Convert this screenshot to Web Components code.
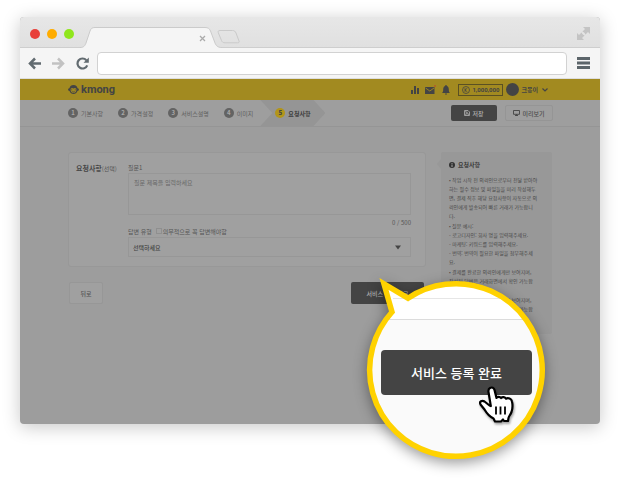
<!DOCTYPE html>
<html lang="ko">
<head>
<meta charset="utf-8">
<title>kmong</title>
<style>
body{margin:0;background:#fff;font-family:"Noto Sans CJK KR","Noto Sans",sans-serif;font-size:6px;line-height:9px;color:#555}
</style>
</head>
<body>
<browser-window>
  <tab-strip></tab-strip>
  <tool-bar></tool-bar>
  <site-header></site-header>
  <step-nav>
    <step-item n="1">기본사항</step-item>
    <step-item n="2">가격설정</step-item>
    <step-item n="3">서비스설명</step-item>
    <step-item n="4">이미지</step-item>
    <step-item n="5" active>요청사항</step-item>
  </step-nav>
  <page-body>
    <request-form></request-form>
    <help-panel slot="side"></help-panel>
  </page-body>
  <zoom-bubble slot="over">서비스 등록 완료</zoom-bubble>
</browser-window>
<script>
const base = `<style>
:host,*{box-sizing:border-box}
button,input,textarea,select{font:inherit;color:inherit;margin:0;padding:0;border:0;background:none;border-radius:0;outline:0}
svg{display:block;flex:none}
a{color:inherit;text-decoration:none}
</style>`;
const define = (name, html) => customElements.define(name, class extends HTMLElement {
  constructor() {
    super();
    this.attachShadow({mode: 'open'}).innerHTML = base + html;
  }
});

define('browser-window', `<style>
:host{display:block;padding:17px 25px 56px 20px}
.frame{position:relative;border-radius:4px;background:#9d9d9d;box-shadow:0 3px 18px rgba(0,0,0,.22)}
</style><div class="frame"><slot></slot><slot name="over"></slot></div>`);

define('tab-strip', `<style>
:host{display:flex;align-items:flex-end;height:31px;padding:0 10px;background:linear-gradient(#e7e7e7,#e0e0e0);border-bottom:1px solid #cecece;border-radius:4px 4px 0 0}
.lights{display:flex;gap:7px;margin-bottom:8px}
.lights i{width:10px;height:10px;border-radius:50%}
.tab{position:relative;width:142px;height:21px;margin:0 0 -1px 6px}
.tab>svg{position:absolute;inset:0}
.tab button{position:absolute;right:15px;top:7px;width:9px;height:9px;display:grid;place-items:center}
.new{margin:0 auto 3px -5px}
.full{margin-bottom:7px}
</style>
<div class="lights"><i style="background:#e8403a"></i><i style="background:#ffac00"></i><i style="background:#90e61c"></i></div>
<div class="tab">
<svg width="142" height="21"><path d="M0 20.5C4 20.5 5 18.500 6 16L10 4C11 1.500 12 .5 15 .5H125C128 .5 129.500 1.500 130.500 4L135 16C136 18.500 137.500 20.500 142 20.500V21H0z" fill="#f5f5f5"/><path d="M0 20.500C4 20.500 5 18.500 6 16L10 4C11 1.500 12 .5 15 .5H125C128 .5 129.500 1.500 130.500 4L135 16C136 18.500 137.500 20.500 142 20.500" fill="none" stroke="#cbcbcb"/></svg>
<button aria-label="탭 닫기"><svg width="7" height="7" stroke="#ababab" stroke-width="1.300"><path d="M1 1L6 6M6 1L1 6"/></svg></button>
</div>
<button class="new" aria-label="새 탭"><svg width="24" height="14" fill="none" stroke="#cacaca"><path d="M3 .5H15.500C17.500 .5 18.300 1.500 19 3L22 11C22.500 12.300 22 12.800 20.500 12.800H8C6 12.800 5.200 12 4.500 10.500L1.300 2.800C.8 1.300 1.200 .5 3 .5z"/></svg></button>
<button class="full" aria-label="전체 화면"><svg width="13" height="13" fill="#c4c4c4"><path d="M6 0H13V7L11 5L8.500 7.500L5.500 4.500L8 2zM0 6L2 8L4.500 5.500L7.500 8.500L5 11L7 13H0z"/><path d="M5 6.500L6.500 5L8 6.500L6.500 8z" fill="#e4e4e4"/></svg></button>`);

define('tool-bar', `<style>
:host{display:flex;align-items:center;gap:11px;height:31px;padding:0 10px 0 8px;background:#f5f5f5;border-bottom:1px solid #dedede}
input{flex:1;min-width:0;height:23px;background:#fff;border:1px solid #d2d2d2;border-radius:4px;margin:0 -1px 0 -3px}
</style>
<button aria-label="뒤로"><svg width="13" height="13" fill="none" stroke="#626b70" stroke-width="2.500"><path d="M7 1.500L2 6.500L7 11.500M2 6.500H13"/></svg></button>
<button aria-label="앞으로"><svg width="13" height="13" fill="none" stroke="#c2c2c2" stroke-width="2.500"><path d="M6 1.500L11 6.500L6 11.500M11 6.500H0"/></svg></button>
<button aria-label="새로고침"><svg width="13" height="13" fill="none" stroke="#626b70" stroke-width="2.200"><path d="M10.300 3.200A5 5 0 1 0 11.200 8.300"/><path d="M12.800 .5V5.800H7.500z" fill="#626b70" stroke="none"/></svg></button>
<input aria-label="주소">
<button aria-label="메뉴"><svg width="13" height="12" fill="#5c656a"><path d="M0 0H13V3H0zM0 4.500H13V7.500H0zM0 9H13V12H0z"/></svg></button>`);

define('site-header', `<style>
:host{display:flex;align-items:center;height:21px;padding:0 52px 0 48px;background:#a28a20;color:#444;font-weight:700}
.logo{display:flex;align-items:center;gap:2px;margin-right:auto;font:700 11px/14px Roboto,sans-serif}
nav{display:flex;align-items:center;gap:6px}
.cash{display:flex;align-items:center;gap:2px;height:12px;padding:0 3px;border:1px solid #5a5023;margin:0 -3px 0 2px;font-family:Roboto,sans-serif}
.user{display:flex;align-items:center;gap:2px}
.user i{width:13px;height:13px;border-radius:50%;background:#444}
.user svg{margin-left:2px}
</style>
<a class="logo" href="#"><svg width="11" height="9" viewBox="0 0 11 9"><path d="M5.500 0C8 0 9.300 1.500 9.500 3.200C11.400 3.200 11.400 6 9.500 6C8.700 8 7.500 9 5.500 9S2.300 8 1.500 6C-.4 6-.4 3.200 1.500 3.200C1.700 1.500 3 0 5.500 0z" fill="#444"/><path d="M5.500 3.500C4 2.300 2.300 3.200 2.600 5.300C3 7.200 4 7.800 5.500 7.800S8 7.200 8.400 5.300C8.700 3.200 7 2.300 5.500 3.500z" fill="#a28a20"/><path d="M3.700 4.300v1M7.300 4.300v1M4.300 6.500q1.200 .7 2.400 0" stroke="#444" stroke-width=".7" fill="none"/></svg>kmong</a>
<nav>
<a href="#" aria-label="통계"><svg width="8" height="8" fill="#444"><path d="M0 4H2V8H0zM3 0H5V8H3zM6 2H8V8H6z"/></svg></a>
<a href="#" aria-label="메시지"><svg width="11" height="10"><path d="M0 2H9.500V9H0z" fill="#444"/><path d="M.5 3L4.800 6L9 3" fill="none" stroke="#a28a20" stroke-width=".9"/><circle cx="10" cy="1" r="1" fill="#b35a28"/></svg></a>
<a href="#" aria-label="알림"><svg width="8" height="10" fill="#444"><path d="M4 0C4.600 0 4.900 .4 4.900 1C6.500 1.500 6.800 3 6.800 4.500C6.800 6.500 7.300 7.200 8 8H0C.7 7.200 1.200 6.500 1.200 4.500C1.200 3 1.500 1.500 3.100 1C3.100 .4 3.400 0 4 0zM3 8.500H5Q5 9.700 4 9.700T3 8.500z"/></svg></a>
<a class="cash" href="#"><svg width="8" height="8" fill="none" stroke="#444" stroke-width=".8"><circle cx="4" cy="4" r="3.500"/><path d="M3 2.200V5.800M5.300 2.200L3 4L5.300 5.800"/></svg>1,000,000</a>
<a class="user" href="#"><i></i>크몽이<svg width="6" height="4" fill="none" stroke="#444" stroke-width="1.200"><path d="M.5 .5L3 3L5.500 .5"/></svg></a>
</nav>`);

define('step-nav', `<style>
:host{display:flex;align-items:center;height:27px;padding:0 47px 0 48px;border-bottom:1px solid #959595;background:#9e9e9e}
.steps{display:flex;align-items:center;gap:15px;margin-right:auto}
button{display:flex;align-items:center;justify-content:center;gap:2px;height:16px;border-radius:2px;font-weight:500}
.save{width:46px;background:#444;color:#b0b0b0;margin-right:8px}
.pre{width:48px;border:1px solid #959595;color:#4c4c4c}
</style>
<div class="steps"><slot></slot></div>
<button class="save"><svg width="6" height="6" fill="none" stroke="#b0b0b0" stroke-width=".8"><path d="M.5 .5H4L5.500 2V5.500H.5zM1.800 .5V2.300H3.800M1.800 5.500V3.700H4.300V5.500"/></svg>저장</button>
<button class="pre"><svg width="7" height="6"><path d="M.5 .5H6.500V4.300H.5zM3.500 4.300V5.500M2 5.500H5" fill="none" stroke="#444" stroke-width=".9"/></svg>미리보기</button>`);

customElements.define('step-item', class extends HTMLElement {
  constructor() {
    super();
    this.attachShadow({mode: 'open'}).innerHTML = base + `<style>
:host{display:block;color:#606060}
a{display:flex;align-items:center;gap:3px;height:26px}
b{width:10px;height:10px;border-radius:50%;background:#636363;color:#a8a8a8;text-align:center;font-size:6px;line-height:10px}
:host([active]){margin-left:-8px;color:#3c3c3c;font-weight:700}
:host([active]) a{padding:0 15px;background:#959595;clip-path:polygon(0 0,calc(100% - 12px) 0,100% 50%,calc(100% - 12px) 100%,0 100%,12px 50%)}
:host([active]) b{background:#b2951a;color:#444}
</style><a href="#"><b></b><span><slot></slot></span></a>`;
    this.shadowRoot.querySelector('b').textContent = this.getAttribute('n');
  }
});

define('page-body', `<style>
:host{display:flex;align-items:flex-start;gap:15px;padding:25px 48px 90px}
.main{flex:1;min-width:0}
.side{width:111px}
</style><div class="main"><slot></slot></div><div class="side"><slot name="side"></slot></div>`);

define('request-form', `<style>
:host{display:block}
.card{display:flex;background:#a0a0a0;border:1px solid #989898;border-radius:3px;padding:10px 14px 9px 7px}
.title{width:52px;line-height:10px}
.title b{font-size:7px;color:#484848}
.fields{flex:1;min-width:0;display:flex;flex-direction:column}
label{line-height:9px}
textarea{display:block;width:100%;height:42px;margin-top:1px;padding:4px 5px;border:1px solid #979797;resize:none}
textarea::placeholder{color:#686868}
.count{text-align:right;line-height:8px;margin-top:4px}
.type{display:flex;align-items:center;gap:4px;height:8px}
.check{display:flex;align-items:center;gap:1px}
input{appearance:none;width:6px;height:6px;border:1px solid #8f8f8f}
.pick{display:flex;align-items:center;margin-top:2px;border:1px solid #979797;height:20px;padding-right:9px}
select{appearance:none;flex:1;height:18px;padding-left:4px;color:#444;font-weight:500}
.actions{display:flex;justify-content:space-between;margin:15px 2px 0 1px}
.actions button{height:22px;border-radius:2px;font-weight:500}
.back{width:34px;border:1px solid #979797;background:#a0a0a0}
.done{width:73px;background:#444;color:#b0b0b0}
</style>
<div class="card">
<div class="title"><b>요청사항</b>(선택)</div>
<div class="fields">
<label for="q">질문1</label>
<textarea id="q" placeholder="질문 제목을 입력하세요"></textarea>
<div class="count">0 / 500</div>
<div class="type"><label for="s">답변 유형</label><label class="check"><input type="checkbox">의무적으로 꼭 답변해야함</label></div>
<div class="pick"><select id="s"><option>선택하세요</option></select><svg width="6" height="5" fill="#444"><path d="M0 .5H6L3 4.500z"/></svg></div>
</div>
</div>
<div class="actions"><button class="back">뒤로</button><button class="done">서비스 등록 완료</button></div>`);

define('help-panel', `<style>
:host{display:block;position:relative;padding:8px 0 12px 8px;background:#989898;border-radius:2px;color:#484848}
:host::before{content:"";position:absolute;left:-4px;top:7px;border:5px solid transparent;border-right:4px solid #989898;border-left:0}
h2{display:flex;align-items:center;gap:3px;margin:0 0 5px;font-size:6px;line-height:10px;color:#3c3c3c}
ul{list-style:none;margin:0;padding:0;display:flex;flex-direction:column;gap:1px;font-size:5px;line-height:9px;white-space:nowrap}
ul ul{gap:0}
</style>
<h2><svg width="6" height="6"><circle cx="3" cy="3" r="3" fill="#333"/><path d="M3 1V1.900M3 2.500V5" stroke="#a8a8a8"/></svg>요청사항</h2>
<ul>
<li>• 작업 시작 전 의뢰인으로부터 전달 받아야<br>하는 필수 정보 및 파일들을 미리 작성해두<br>면, 결제 직후 해당 요청사항이 자동으로 의<br>뢰인에게 발송되어 빠른 거래가 가능합니<br>다.</li>
<li>• 질문 예시:<ul><li>- 로고디자인: 회사 명을 입력해주세요.</li><li>- 마케팅: 키워드를 입력해주세요.</li><li>- 번역: 번역이 필요한 파일을 첨부해주세<br>요.</li></ul></li>
<li>• 결제를 완료한 의뢰인에게만 보여지며,<br>작성된 답변은 거래화면에서 확인 가능합<br>니다.</li>
<li>• 결제를 완료한 의뢰인에게만 보여지며,<br>작성된 답변은 거래화면에서 확인 가능합<br>니다.</li>
</ul>`);

define('zoom-bubble', `<style>
:host{position:absolute;right:49px;top:258px;width:192px;height:192px;display:flex;align-items:center;justify-content:center}
.shape{position:absolute;inset:0;filter:drop-shadow(0 4px 7px rgba(0,0,0,.4))}
button{position:relative;width:151px;height:45px;margin-top:3px;margin-left:3px;border-radius:4px;background:#444;color:#fff;font-size:13px;line-height:20px;font-weight:500}
.hand{position:absolute;left:119px;top:110px;filter:drop-shadow(1px 2px 1px rgba(0,0,0,.35))}
</style>
<svg class="shape" width="192" height="192">
<defs><clipPath id="c"><path d="M33 37L25 9L49 23A86.500 86.500 0 1 1 33 37z"/></clipPath></defs>
<g clip-path="url(#c)"><path d="M0 0H192V45H0z" fill="#fff"/><path d="M0 45H192V192H0z" fill="#fafafa"/><path d="M34 23.500H192" stroke="#e6e6e6"/><path d="M0 44.500H192" stroke="#dcdcdc"/></g>
<path d="M33 37L25 9L49 23.200A86.300 86.300 0 1 1 33 37z" fill="none" stroke="#ffd200" stroke-width="5.500" stroke-miterlimit="10"/>
</svg>
<button><slot></slot></button>
<svg class="hand" width="38" height="40" viewBox="0 0 38 40"><path d="M12 3C14 1.800 16 3 16.500 5L18.500 13C19.500 11.500 22 11.500 23 13C24.500 11.500 27 12 28 13.700C30 12.500 33.500 13.500 34 16.500C34.800 20 34.500 24 33.500 27C32.300 30 31 31 30.500 33L30 36H26L25 34.500L23 36.500H17L15.500 33.500C11.500 31.500 8.500 28 6.500 24.500L2.500 19.500C1 16.500 4 14.800 6.500 16.500L11.500 20.500L12.800 21L10.500 7C10.200 5 10.500 3.800 12 3z" fill="#fff" stroke="#000" stroke-width="2.200" stroke-linejoin="round"/><path d="M18 21.500V29.500M22.500 21.500V29.500M27 21.500V29.500" stroke="#000" stroke-width="1.800"/></svg>`);
</script>
</body>
</html>
